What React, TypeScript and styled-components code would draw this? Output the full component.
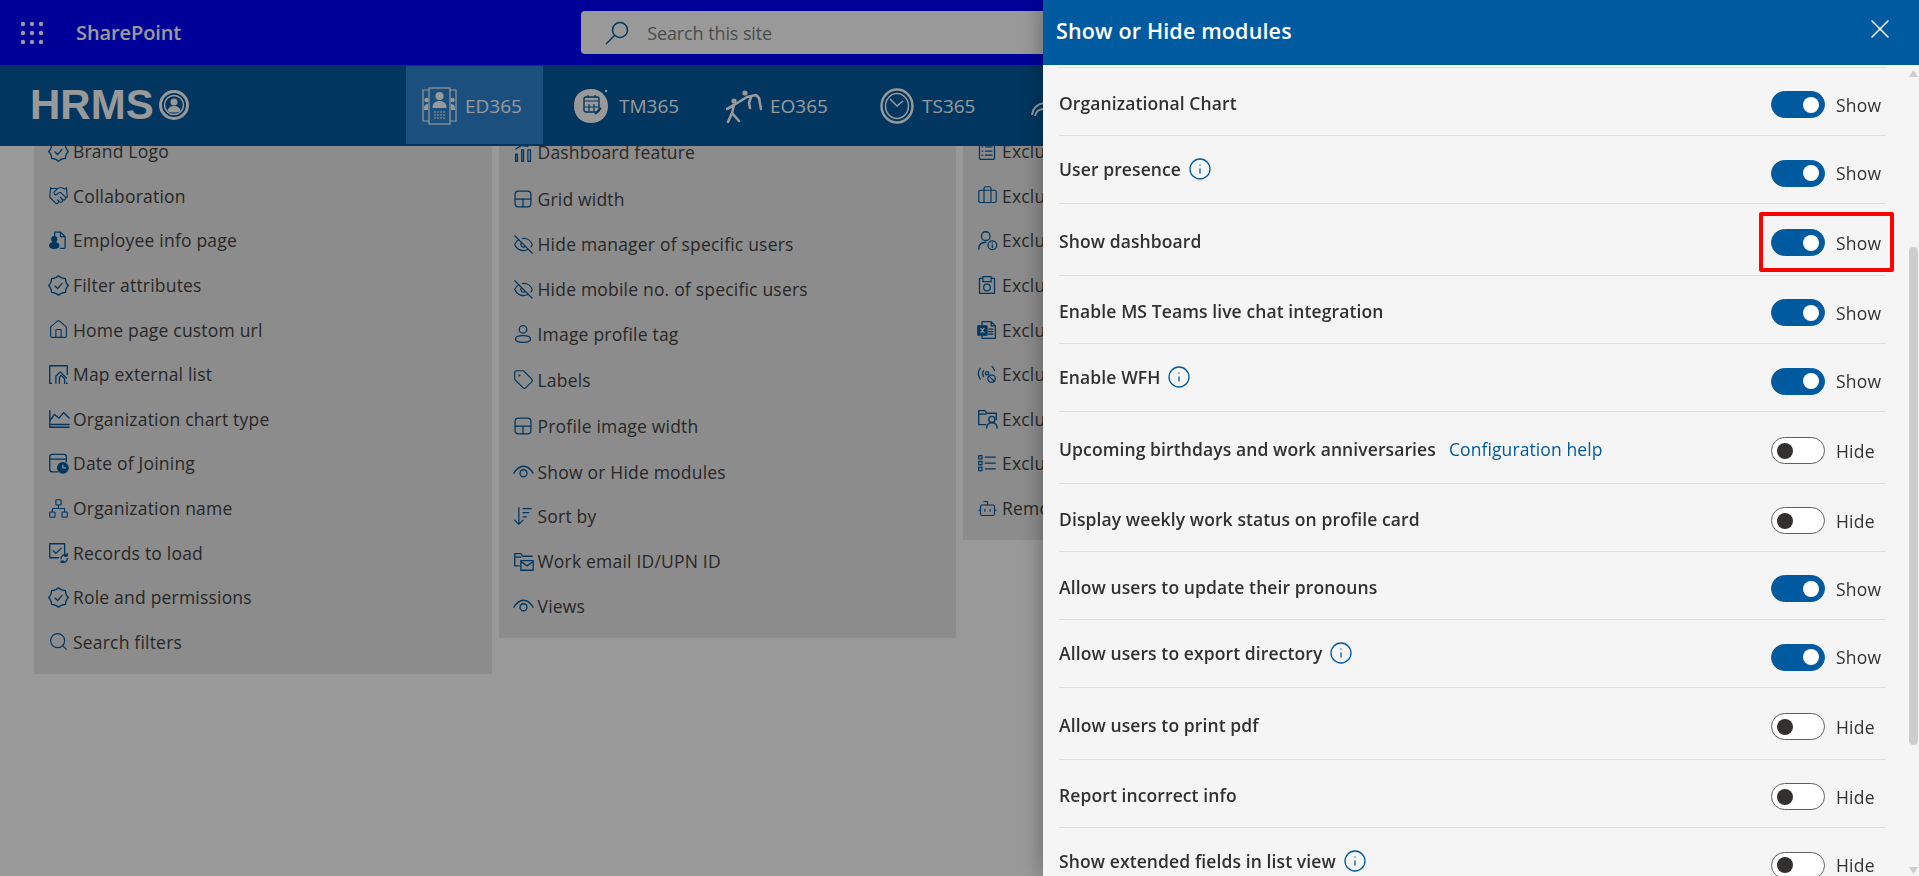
import React from "react";
import styled, { createGlobalStyle } from "styled-components";
import {
  Bot,
  Briefcase,
  EyeOff,
  Handshake,
  House,
  Info,
  Network,
  Search,
  Tag,
  X,
} from "lucide-react";

const BLUE = "#005a9f";
const FONT = `"Open Sans", "Noto Sans", sans-serif`;

const GlobalStyle = createGlobalStyle`
  html, body { margin: 0; padding: 0; height: 100%; overflow: hidden; background: #fff; }
  body { font-family: ${FONT}; }
  * { box-sizing: border-box; }
`;

const Page = styled.div`
  width: 100%;
  height: 100vh;
  display: flex;
  flex-direction: column;
  overflow: hidden;
`;

/* ---------- suite bar ---------- */
const SuiteBar = styled.header`
  height: 65px;
  flex: none;
  background: #0000ff;
  display: flex;
  align-items: center;
  padding-left: 21px;
  color: #fff;
`;
const AppName = styled.span`
  margin-left: 33px;
  font-size: 20px;
  font-weight: 600;
  letter-spacing: -0.1px;
`;
const SearchBox = styled.div`
  margin-left: 400px;
  width: 700px;
  height: 43px;
  background: #fff;
  border-radius: 4px;
  display: flex;
  align-items: center;
  padding-left: 24px;
  gap: 18px;
  color: ${BLUE};
`;
const SearchText = styled.span`
  font-size: 18px;
  color: #7f7f7f;
  letter-spacing: -0.1px;
`;

/* ---------- app nav ---------- */
const NavBar = styled.nav`
  height: 81px;
  flex: none;
  background: ${BLUE};
  display: flex;
  align-items: stretch;
  padding: 1px 0 2px 30px;
  position: relative;
  z-index: 1;
  color: #fff;
`;
const Logo = styled.div`
  width: 376px;
  flex: none;
  display: flex;
  align-items: center;
  gap: 5px;
  font-family: "Liberation Sans", sans-serif;
  font-weight: 700;
  font-size: 42px;
  line-height: 1;
`;
const NavTab = styled.div<{ $w: number; $active?: boolean }>`
  width: ${(p) => p.$w}px;
  flex: none;
  margin-right: 14px;
  padding-left: 16px;
  display: flex;
  align-items: center;
  gap: 8px;
  font-size: 19px;
  padding-top: 2px;
  background: ${(p) => (p.$active ? "#2e84d3" : "transparent")};
`;

/* ---------- page content ---------- */
const Content = styled.main`
  flex: 1;
  min-height: 0;
  overflow: hidden;
  background: #fff;
`;
const Columns = styled.div`
  margin-top: -17px;
  padding-left: 34px;
  display: flex;
  align-items: flex-start;
  gap: 7px;
`;
const Card = styled.section`
  width: 457.5px;
  flex: none;
  background: #e9e9e9;
  padding: 0 14px 10px;
`;
const CardRow = styled.div<{ $h?: number }>`
  height: ${(p) => p.$h ?? 44.6}px;
  display: flex;
  align-items: center;
  font-size: 17.5px;
  color: #444;
  white-space: nowrap;
  letter-spacing: 0.2px;
`;
const RowIcon = styled.span`
  width: 25px;
  flex: none;
  display: flex;
  align-items: center;
  color: ${BLUE};
`;

/* ---------- dim layer + side panel ---------- */
const Dim = styled.div`
  position: fixed;
  inset: 0;
  background: rgba(0, 0, 0, 0.4);
  z-index: 2;
`;
const Panel = styled.aside`
  position: fixed;
  top: 0;
  right: 0;
  bottom: 0;
  width: 876px;
  z-index: 3;
  background: #f5f5f5;
  box-shadow: 0 0 22px rgba(0, 0, 0, 0.35);
  display: flex;
  flex-direction: column;
`;
const PanelHeader = styled.div`
  height: 65px;
  flex: none;
  background: ${BLUE};
  color: #fff;
  display: flex;
  align-items: center;
  justify-content: space-between;
  padding: 0 23px 0 13px;
`;
const PanelTitle = styled.h2`
  margin: 0 0 4px;
  font-size: 21.5px;
  font-weight: 600;
  letter-spacing: 0.15px;
`;
const CloseButton = styled.span`
  display: flex;
  margin-bottom: 8px;
`;
const PanelBody = styled.div`
  flex: 1;
  min-height: 0;
  display: flex;
`;
const List = styled.div`
  flex: 1;
  min-width: 0;
  overflow: hidden;
  padding: 2px 19px 0 16px;
`;
const Row = styled.div<{ $tall?: boolean }>`
  height: ${(p) => (p.$tall ? 72 : 68)}px;
  display: flex;
  align-items: center;
  justify-content: space-between;
  border-bottom: 1px solid #dedede;
  &:first-child {
    height: 69px;
    border-top: 1px solid #dedede;
  }
`;
const RowLabel = styled.div<{ $info?: boolean }>`
  display: flex;
  align-items: center;
  font-size: 17.5px;
  font-weight: 600;
  letter-spacing: 0.1px;
  color: #323130;
  padding: ${(p) => (p.$info ? "0 0 2px" : "3px 0 0")};
`;
const InfoMark = styled.span`
  display: flex;
  margin-left: 7px;
  color: ${BLUE};
`;
const HelpLink = styled.a`
  margin-left: 13px;
  font-weight: 400;
  color: ${BLUE};
`;
const ToggleGroup = styled.div<{ $low?: boolean }>`
  display: flex;
  align-items: center;
  gap: 11px;
  padding-top: ${(p) => (p.$low ? 7 : 6)}px;
`;
const Track = styled.span<{ $on: boolean }>`
  width: 54px;
  height: 27px;
  border-radius: 14px;
  display: flex;
  align-items: center;
  padding: 0 5px;
  justify-content: ${(p) => (p.$on ? "flex-end" : "flex-start")};
  background: ${(p) => (p.$on ? BLUE : "#fff")};
  border: 1px solid ${(p) => (p.$on ? BLUE : "#605e5c")};
`;
const Knob = styled.span<{ $on: boolean }>`
  width: 16px;
  height: 16px;
  border-radius: 50%;
  background: ${(p) => (p.$on ? "#fff" : "#323130")};
`;
const StateText = styled.span`
  width: 50px;
  font-size: 17.5px;
  color: #323130;
  letter-spacing: 0.2px;
`;
const Highlight = styled.div`
  position: absolute;
  left: 716px;
  top: 212px;
  width: 135px;
  height: 60px;
  border: 4px solid #ff0000;
  border-radius: 2px;
  pointer-events: none;
`;
const Rail = styled.div`
  width: 14px;
  flex: none;
  position: relative;
  padding: 5px 1px 2px 4px;
  display: flex;
  flex-direction: column;
  align-items: stretch;
  justify-content: space-between;
`;
const RailArrow = styled.span<{ $down?: boolean }>`
  display: block;
  height: 7px;
  background: #cdcdcd;
  clip-path: ${(p) =>
    p.$down ? "polygon(0 0, 100% 0, 50% 100%)" : "polygon(50% 0, 100% 100%, 0 100%)"};
`;
const RailThumb = styled.span`
  position: absolute;
  left: 4px;
  right: 1px;
  top: 182px;
  height: 498px;
  border-radius: 5px;
  background: #cdcdcd;
`;

/* ---------- drawn icons ---------- */
const Line: React.FC<{ children: React.ReactNode; size?: number }> = ({ children, size = 20 }) => (
  <svg width={size} height={size} viewBox="0 0 24 24" fill="none" stroke="currentColor" strokeWidth={1.5} strokeLinecap="round" strokeLinejoin="round">
    {children}
  </svg>
);

const lucide = { size: 21, strokeWidth: 1.3 };

// toothed badge outline with a tick, the one used for several settings
const badgePoints = Array.from({ length: 24 }, (_, i) => {
  const a = (i / 24) * Math.PI * 2;
  const r = i % 3 === 0 ? 11.2 : 9.6;
  return `${(12 + r * Math.cos(a)).toFixed(2)},${(12 + r * Math.sin(a)).toFixed(2)}`;
}).join(" ");

const BadgeGear = () => (
  <Line size={21}>
    <polygon points={badgePoints} />
    <path d="M8 12.500l3 3 5-6" />
  </Line>
);
const EyeArc = () => (
  <Line size={21}>
    <path d="M1 14c3-5 7-8 11-8s8 3 11 8" />
    <circle cx="12" cy="14" r="4" />
  </Line>
);
const GridWidth = () => (
  <Line>
    <rect x="2.5" y="2.5" width="19" height="19" rx="4" />
    <path d="M2.5 12h19M12 12v9.5" />
  </Line>
);
const FileUserIcon = () => (
  <Line>
    <path d="M8 7V2.5h7l5.5 5.5v13a1 1 0 0 1-1 1H15M15 2.5V8h5.5" />
    <circle cx="7.5" cy="11" r="3" fill="currentColor" />
    <path d="M2 19c0-3 2.5-4 5.5-4s5.5 1 5.5 4-2.5 3-5.5 3S2 22 2 19z" fill="currentColor" />
  </Line>
);
const MapList = () => (
  <Line size={21}>
    <path d="M4 22H2V2h20v10M22 22h-1" />
    <path d="M9 22v-8l5-5 7 7M13 22v-7l2-2 4 4v5" />
  </Line>
);
const ChartType = () => (
  <Line size={22}>
    <path d="M2 3v18h21M2 14l5-7 5 4 5-6 6 6M2 18h21" />
  </Line>
);
const DateJoin = () => (
  <Line size={21}>
    <path d="M11 21.5H5a3 3 0 0 1-3-3v-14a3 3 0 0 1 3-3h13a3 3 0 0 1 3 3V10M2 7h19" />
    <circle cx="17" cy="17" r="6" fill="currentColor" />
    <path d="M17 14v3h3" stroke="#e9e9e9" />
  </Line>
);
const RecordsLoad = () => (
  <Line size={21}>
    <path d="M19 14V2H2v16h10M6 10l3 3 6-6" />
    <path d="M15 19a4 4 0 0 1 7-3M22 19a4 4 0 0 1-7 3M22 13v3h-3M15 25v-3h3" />
  </Line>
);
const ChartBars = () => (
  <Line size={21}>
    <path d="M3 14h2v8H3zM10 9h2v13h-2zM17 9h3v13h-3zM3 8l7-4 7 1" />
  </Line>
);
const ProfileTag = () => (
  <Line>
    <circle cx="12" cy="6.5" r="4.5" />
    <path d="M3 18c0-3 3-4 9-4s9 1 9 4-3 4-9 4-9-1-9-4z" />
  </Line>
);
const SortBy = () => (
  <Line>
    <path d="M7 2v20M2 17l5 5 5-5M12 3h10M12 8h7M12 13h4" />
  </Line>
);
const FolderMail = () => (
  <Line size={21}>
    <path d="M7 17H2V3h7l2 3h11M2 7h7" />
    <path d="M9 11h14v11H9zM9 12l7 5 7-5" />
  </Line>
);
const DocList = () => (
  <Line>
    <rect x="3" y="2" width="18" height="20" rx="1" />
    <path d="M10 7h8M10 12h8M10 17h8M6 7h1M6 12h1M6 17h1" />
  </Line>
);
const UserInfo = () => (
  <Line size={21}>
    <circle cx="10" cy="7" r="5" />
    <path d="M2 22c0-5 2-8 8-8" />
    <circle cx="17.5" cy="17.5" r="5" />
    <path d="M17.5 17v3M17.5 14.8v.1" />
  </Line>
);
const SaveClock = () => (
  <Line>
    <path d="M7 4H3v18h18V4h-4M7 2h10v6H7z" />
    <circle cx="12" cy="15" r="4" />
  </Line>
);
const ExcelDoc = () => (
  <Line>
    <path d="M6 7V2h11l5 5v15H6v-4M17 2v5h5M14 11h5M14 14h5M14 17h5" />
    <rect x="1" y="7" width="11" height="11" fill="currentColor" />
    <path d="M4.5 10l4 5M8.500 10l-4 5" stroke="#e9e9e9" />
  </Line>
);
const Broadcast = () => (
  <Line>
    <path d="M4 5C1 9 1 14 4 18M8 8c-1.500 2-1.500 5 0 7M18 3c1.500 1 2.500 3 3 5" />
    <circle cx="12" cy="11" r="2" />
    <circle cx="17.500" cy="17.500" r="4.500" />
    <path d="M14.500 14.500l6 6" />
  </Line>
);
const FolderUser = () => (
  <Line size={21}>
    <path d="M10 19H2V3h7l2 3h11v7M2 7h8" />
    <circle cx="17" cy="13" r="3.500" />
    <path d="M11 23c0-4 2.500-6 6-6s6 2 6 6" />
  </Line>
);
const CheckList = () => (
  <Line>
    <path d="M2 3h4v4H2zM2 10h4v4H2zM2 17h4v4H2zM10 5h12M10 12h12M10 19h12" />
  </Line>
);

const WaffleIcon = () => (
  <svg width="22" height="22" viewBox="0 0 22 22" fill="#fff">
    {[2, 11, 20].flatMap((cy) =>
      [2, 11, 20].map((cx) => <circle key={`${cx}-${cy}`} cx={cx} cy={cy} r="2.200" />)
    )}
  </svg>
);
const SiteSearchIcon = () => (
  <svg width="24" height="24" viewBox="0 0 24 24" fill="none" stroke="currentColor" strokeWidth="1.500">
    <circle cx="15" cy="9" r="7.500" />
    <path d="M9.500 14.500L1 23" />
  </svg>
);
const LogoMark = () => (
  <svg width="30" height="30" viewBox="0 0 30 30" fill="none" stroke="#fff">
    <circle cx="15" cy="15" r="13.500" strokeWidth="3" />
    <circle cx="15" cy="15" r="9.500" strokeWidth="1.500" />
    <circle cx="15" cy="12" r="3.500" fill="#fff" stroke="none" />
    <path d="M8.500 21c1-4 3.500-5 6.500-5s5.500 1 6.500 5c-3.500 2-9.500 2-13 0z" fill="#fff" stroke="none" />
  </svg>
);
const DirectoryIcon = () => (
  <svg width="35" height="38" viewBox="0 0 35 38" fill="none" stroke="#fff" strokeWidth="1.200">
    <path d="M7 3H1v31h6M28 3h6v31h-6" />
    <rect x="7" y="1" width="21" height="36" />
    <circle cx="17.500" cy="9" r="4" fill="#fff" stroke="none" />
    <path d="M10.500 21c0-5 3-7 7-7s7 2 7 7z" fill="#fff" stroke="none" />
    <path d="M12 25h11M12 28h11M12 31h11" strokeDasharray="2 1" />
    <circle cx="4.500" cy="13" r="2.200" fill="#fff" stroke="none" />
    <circle cx="30.500" cy="13" r="2.200" fill="#fff" stroke="none" />
    <path d="M2 23c0-4 1-6 4-6v6zM33 23c0-4-1-6-4-6v6z" fill="#fff" stroke="none" />
  </svg>
);
const TaskIcon = () => (
  <svg width="38" height="36" viewBox="0 0 38 36" fill="none">
    <path d="M17 1c9-1 18 6 18 17s-8 17-17 17S1 29 1 18 7 2 17 1z" fill="#fff" />
    <circle cx="33" cy="3" r="1.200" fill="#fff" />
    <rect x="11" y="9" width="15" height="15" rx="2" stroke={BLUE} strokeWidth="1.400" />
    <path d="M11 13h15M16 16v7M21 16v7M11 19h15M15 7v3M22 7v3" stroke={BLUE} strokeWidth="1.200" />
    <path d="M22 26l6-6" stroke={BLUE} strokeWidth="2" />
  </svg>
);
const ClimbIcon = () => (
  <svg width="36" height="34" viewBox="0 0 36 34" fill="none" stroke="#fff" strokeWidth="2.600" strokeLinecap="round" strokeLinejoin="round">
    <circle cx="8" cy="12" r="2.600" fill="#fff" stroke="none" />
    <circle cx="19" cy="4" r="2.600" fill="#fff" stroke="none" />
    <path d="M16 11L8 16l-2 8-4 9M6 24l7 8M8 16l-7 4" />
    <path d="M16 11l5-3 9-2 3 3 2 11M25 8l-2 6 1 5" />
  </svg>
);
const ClockIcon = () => (
  <svg width="34" height="36" viewBox="0 0 34 36" fill="none" stroke="#fff">
    <ellipse cx="17" cy="18" rx="15.500" ry="16.500" strokeWidth="2.400" />
    <ellipse cx="17" cy="18" rx="11.500" ry="12.500" strokeWidth="1.500" />
    <path d="M10 11l7 7 6-5" strokeWidth="1.500" />
  </svg>
);
const WaveIcon = () => (
  <svg width="34" height="36" viewBox="0 0 34 36" fill="none" stroke="#fff" strokeWidth="2">
    <path d="M1 27c1-8 6-11 12-12M4 28c1-5 5-7 9-7" />
  </svg>
);

/* ---------- data ---------- */
type Item = { icon: React.ReactNode; text: string; h?: number };

const col1: Item[] = [
  { icon: <BadgeGear />, text: "Brand Logo" },
  { icon: <Handshake {...lucide} />, text: "Collaboration" },
  { icon: <FileUserIcon />, text: "Employee info page" },
  { icon: <BadgeGear />, text: "Filter attributes" },
  { icon: <House {...lucide} />, text: "Home page custom url" },
  { icon: <MapList />, text: "Map external list" },
  { icon: <ChartType />, text: "Organization chart type" },
  { icon: <DateJoin />, text: "Date of Joining" },
  { icon: <Network {...lucide} />, text: "Organization name" },
  { icon: <RecordsLoad />, text: "Records to load" },
  { icon: <BadgeGear />, text: "Role and permissions" },
  { icon: <Search {...lucide} />, text: "Search filters" },
];

const col2: Item[] = [
  { icon: <ChartBars />, text: "Dashboard feature", h: 46.5 },
  { icon: <GridWidth />, text: "Grid width", h: 46 },
  { icon: <EyeOff {...lucide} />, text: "Hide manager of specific users", h: 45.5 },
  { icon: <EyeOff {...lucide} />, text: "Hide mobile no. of specific users", h: 44.5 },
  { icon: <ProfileTag />, text: "Image profile tag", h: 45 },
  { icon: <Tag {...lucide} />, text: "Labels", h: 46 },
  { icon: <GridWidth />, text: "Profile image width", h: 47 },
  { icon: <EyeArc />, text: "Show or Hide modules", h: 44 },
  { icon: <SortBy />, text: "Sort by", h: 45 },
  { icon: <FolderMail />, text: "Work email ID/UPN ID", h: 45 },
  { icon: <EyeArc />, text: "Views", h: 44 },
];

const col3: Item[] = [
  { icon: <DocList />, text: "Exclude by title" },
  { icon: <Briefcase {...lucide} />, text: "Exclude by job" },
  { icon: <UserInfo />, text: "Exclude by user" },
  { icon: <SaveClock />, text: "Exclude by office" },
  { icon: <ExcelDoc />, text: "Exclude from export" },
  { icon: <Broadcast />, text: "Exclude from presence" },
  { icon: <FolderUser />, text: "Exclude by folder" },
  { icon: <CheckList />, text: "Exclude by list" },
  { icon: <Bot {...lucide} />, text: "Remove bot accounts" },
];

type Setting = {
  label: string;
  on: boolean;
  tall?: boolean;
  info?: boolean;
  link?: string;
};

const settings: Setting[] = [
  { label: "Organizational Chart", on: true },
  { label: "User presence", on: true, info: true },
  { label: "Show dashboard", on: true, tall: true },
  { label: "Enable MS Teams live chat integration", on: true },
  { label: "Enable WFH", on: true, info: true },
  { label: "Upcoming birthdays and work anniversaries", on: false, tall: true, link: "Configuration help" },
  { label: "Display weekly work status on profile card", on: false },
  { label: "Allow users to update their pronouns", on: true },
  { label: "Allow users to export directory", on: true, info: true },
  { label: "Allow users to print pdf", on: false, tall: true },
  { label: "Report incorrect info", on: false },
  { label: "Show extended fields in list view", on: false, info: true },
];

const ItemCard: React.FC<{ items: Item[] }> = ({ items }) => (
  <Card>
    {items.map((item) => (
      <CardRow key={item.text} $h={item.h}>
        <RowIcon>{item.icon}</RowIcon>
        {item.text}
      </CardRow>
    ))}
  </Card>
);

export default function App() {
  return (
    <Page>
      <GlobalStyle />
      <SuiteBar>
        <WaffleIcon />
        <AppName>SharePoint</AppName>
        <SearchBox>
          <SiteSearchIcon />
          <SearchText>Search this site</SearchText>
        </SearchBox>
      </SuiteBar>
      <NavBar>
        <Logo>
          HRMS
          <LogoMark />
        </Logo>
        <NavTab $w={137} $active>
          <DirectoryIcon />
          ED365
        </NavTab>
        <NavTab $w={139}>
          <TaskIcon />
          TM365
        </NavTab>
        <NavTab $w={140}>
          <ClimbIcon />
          EO365
        </NavTab>
        <NavTab $w={137}>
          <ClockIcon />
          TS365
        </NavTab>
        <NavTab $w={137}>
          <WaveIcon />
          LM365
        </NavTab>
      </NavBar>
      <Content>
        <Columns>
          <ItemCard items={col1} />
          <ItemCard items={col2} />
          <ItemCard items={col3} />
        </Columns>
      </Content>
      <Dim />
      <Panel>
        <PanelHeader>
          <PanelTitle>Show or Hide modules</PanelTitle>
          <CloseButton>
            <X size={32} strokeWidth={1.1} />
          </CloseButton>
        </PanelHeader>
        <PanelBody>
          <List>
            {settings.map((s) => (
              <Row key={s.label} $tall={s.tall}>
                <RowLabel $info={s.info}>
                  {s.label}
                  {s.link && <HelpLink>{s.link}</HelpLink>}
                  {s.info && (
                    <InfoMark>
                      <Info size={24} strokeWidth={1.3} />
                    </InfoMark>
                  )}
                </RowLabel>
                <ToggleGroup $low={s.info}>
                  <Track $on={s.on}>
                    <Knob $on={s.on} />
                  </Track>
                  <StateText>{s.on ? "Show" : "Hide"}</StateText>
                </ToggleGroup>
              </Row>
            ))}
          </List>
          <Rail>
            <RailArrow />
            <RailThumb />
            <RailArrow $down />
          </Rail>
        </PanelBody>
        <Highlight />
      </Panel>
    </Page>
  );
}
